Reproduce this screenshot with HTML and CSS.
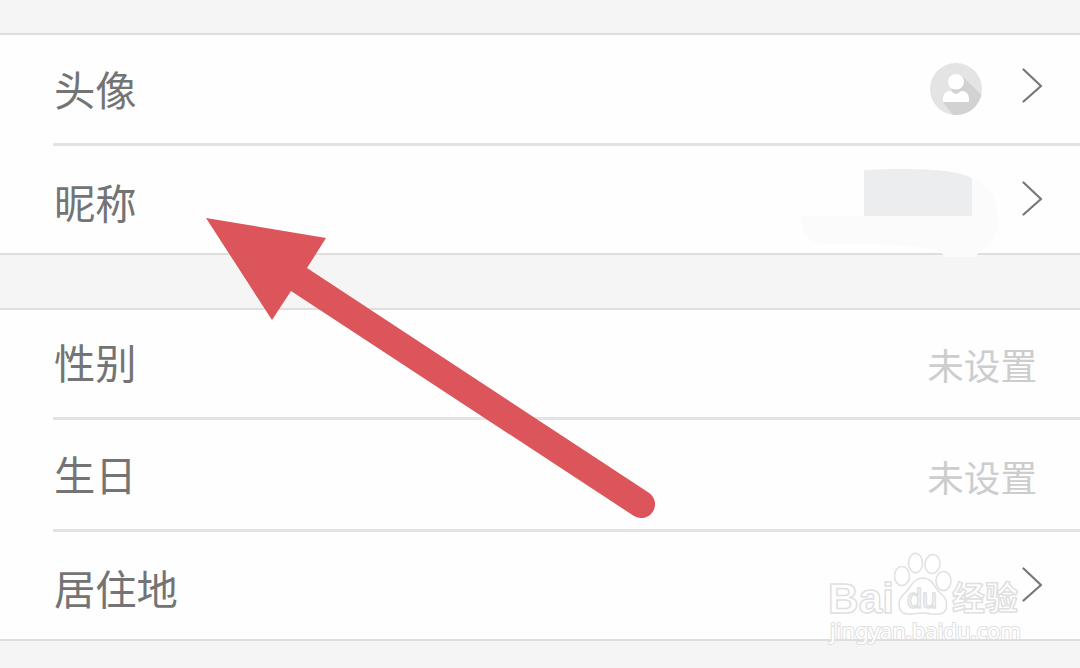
FILE: index.html
```html
<!DOCTYPE html>
<html lang="zh-CN">
<head>
<meta charset="utf-8">
<title>个人资料</title>
<link rel="stylesheet" href="styles.css">
</head>
<body>
<main class="page">
  <section class="group">
    <div class="row row-avatar">
      <span class="label">头像</span>
      <svg class="avatar" viewBox="0 0 52 52">
        <defs><clipPath id="disc"><circle cx="26" cy="26" r="26"/></clipPath></defs>
        <g clip-path="url(#disc)">
          <path fill="#e4e4e4" d="M0 0h52v52H0z"/>
          <path fill="#d2d2d2" d="M32 13l24 23v20H26L13 39z"/>
        </g>
        <ellipse cx="26" cy="18.800" rx="8" ry="7.800" fill="#fff"/>
        <path fill="#fff" d="M13 39v-3c0-5 3-8 7-8 3 0 3 3 6 3s3-3 6-3c4 0 7 3 7 8v3z"/>
      </svg>
      <svg class="chevron" viewBox="0 0 22 36"><path d="M2.500 1.500L20 18L2.500 33.500"/></svg>
    </div>
    <div class="row row-name">
      <span class="label">昵称</span>
      <svg class="smudge" viewBox="0 0 202 92">
        <path fill="#fbfbfc" d="M64 4H130Q182 8 193 30Q208 70 180 84L176 91H146L138 84Q110 79 80 78H20Q4 75 0 50H64z"/>
        <path fill="#ecedef" d="M64 4Q150 0 172 12V50H64z"/>
      </svg>
      <svg class="chevron" viewBox="0 0 22 36"><path d="M2.500 1.500L20 18L2.500 33.500"/></svg>
    </div>
  </section>
  <section class="group">
    <div class="row row-gender"><span class="label">性别</span><span class="value">未设置</span></div>
    <div class="row row-birthday"><span class="label">生日</span><span class="value">未设置</span></div>
    <div class="row row-home">
      <span class="label">居住地</span>
      <svg class="chevron" viewBox="0 0 22 36"><path d="M2.500 1.500L20 18L2.500 33.500"/></svg>
    </div>
  </section>
  <svg class="arrow" viewBox="0 0 452 302">
    <path d="M0 0L120 20L101 50L442.500 274.500A13.500 13.500 0 0 1 428 298L85 73L66 102z"/>
  </svg>
  <svg class="watermark" viewBox="0 0 200 100">
    <g class="mark">
      <text class="latin" x="0" y="64" textLength="66" lengthAdjust="spacingAndGlyphs">Bai</text>
      <ellipse cx="74" cy="27" rx="7.500" ry="9.500"/>
      <ellipse cx="87.500" cy="14" rx="7" ry="9.800"/>
      <ellipse cx="104.500" cy="15" rx="7.500" ry="9.500" transform="rotate(8 104.500 15)"/>
      <ellipse cx="115.500" cy="32" rx="7.500" ry="9.500"/>
      <path d="M95 29C85 29 83 39 76 45C68 52 70 65 80 65C86 65 90 64 95 64C101 64 106 66 112 65C121 63 120 50 113 45C106 39 105 29 95 29z"/>
      <text class="du" x="79" y="59" textLength="30" lengthAdjust="spacingAndGlyphs">du</text>
      <text class="cjk" x="124" y="61" textLength="66" lengthAdjust="spacingAndGlyphs">经验</text>
      <text class="site" x="2" y="90" textLength="191" lengthAdjust="spacingAndGlyphs">jingyan.baidu.com</text>
    </g>
  </svg>
</main>
</body>
</html>
```

FILE: styles.css
```css
* { box-sizing: border-box; }
body {
  margin: 0;
  background: #f5f5f5;
  font-family: "Noto Sans CJK SC", sans-serif;
}
.page {
  position: relative;
  display: flex;
  flex-direction: column;
  gap: 53px;
  height: 668px;
  padding-top: 33px;
  overflow: hidden;
}
.group {
  border-top: 2px solid #dedede;
  border-bottom: 2px solid #dedede;
  background: #fefefe;
}
.row {
  position: relative;
  display: flex;
  align-items: center;
  height: 110px;
  margin-left: 53px;
  padding-right: 37px;
}
.row-avatar, .row-gender, .row-birthday { border-bottom: 3px solid #e3e3e3; }
.row-avatar { height: 111px; }
.row-name { height: 107px; }
.row-birthday { height: 112px; }
.row-home { height: 107px; }
.label {
  margin: -2px auto 0 0;
  padding-left: 1px;
  color: #747474;
  font-size: 41.300px;
  line-height: 48px;
}
.row-name .label { margin-top: 2px; }
.row-gender .label { margin-top: -5px; }
.row-birthday .label { margin-top: -3px; }
.row-home .label { margin-top: 2px; }
.value {
  padding: 2px 6px 0 0;
  color: #cdcdcd;
  font-size: 36.600px;
  line-height: 46px;
}
.row-birthday .value { padding-top: 4px; }
.avatar { width: 52px; height: 52px; margin-right: 39px; }
.chevron {
  width: 22px;
  height: 36px;
  margin-top: -6px;
  fill: none;
  stroke: #777;
  stroke-width: 2.200;
  stroke-linecap: round;
  stroke-linejoin: round;
}
.row-name .chevron, .row-home .chevron { margin-top: -2px; }
.smudge {
  position: absolute;
  top: 20px;
  right: 78px;
  width: 202px;
  height: 92px;
}
.arrow {
  position: absolute;
  left: 206px;
  top: 218px;
  width: 452px;
  height: 302px;
  fill: #db555b;
}
.watermark {
  position: absolute;
  left: 828px;
  top: 549px;
  width: 200px;
  height: 100px;
}
.mark {
  fill: #fff;
  stroke: #e0e0e0;
  stroke-width: 1.500;
  stroke-linejoin: round;
  font-family: "Liberation Sans", sans-serif;
}
.latin { font-size: 43px; font-weight: 700; }
.du { font-size: 27px; font-weight: 400; }
.cjk { font-family: "Noto Sans CJK SC", sans-serif; font-size: 33px; font-weight: 700; }
.site { font-family: "Noto Sans", sans-serif; font-size: 21px; stroke-width: 2; paint-order: stroke; }
```
